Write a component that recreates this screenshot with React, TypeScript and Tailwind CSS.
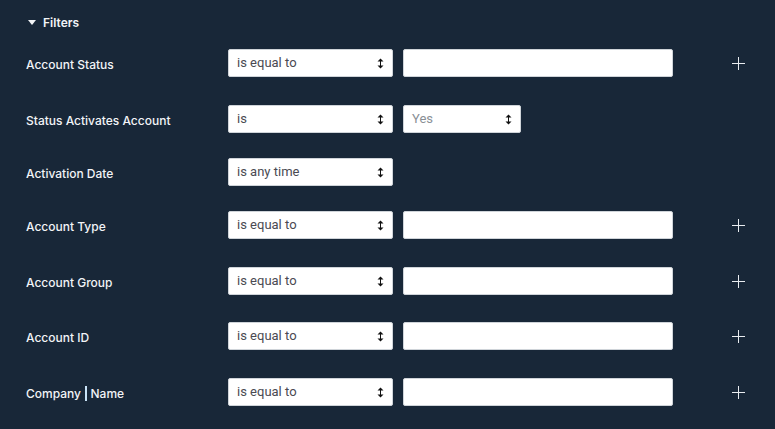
import React from "react";

const Arrows = () => (
  <svg width="7" height="11" viewBox="0 0 7 11" className="shrink-0">
    <path d="M3.5 0.5 L6.5 3.5 L0.5 3.5 Z" fill="#111" />
    <rect x="3" y="3" width="1" height="5" fill="#111" />
    <path d="M3.5 10.5 L6.5 7.5 L0.5 7.5 Z" fill="#111" />
  </svg>
);

const Select = ({ text, w, muted }: { text: string; w: string; muted?: boolean }) => (
  <div
    className={`${w} h-[28px] bg-white border border-[#cfd4d9] rounded-[2px] flex items-center justify-between pl-[8px] pr-[8px] text-[13px] ${
      muted ? "text-[#8a8f96]" : "text-[#4a4a52]"
    }`}
    style={{ fontFamily: "Roboto, 'Liberation Sans', sans-serif" }}
  >
    <span>{text}</span>
    <Arrows />
  </div>
);

const Input = () => (
  <div className="w-[270px] h-[28px] bg-white border border-[#cfd4d9] rounded-[2px]" />
);

const Plus = () => (
  <svg width="13" height="13" viewBox="0 0 13 13">
    <rect x="6" y="0" width="1" height="13" fill="#e8ecf0" />
    <rect x="0" y="6" width="13" height="1" fill="#e8ecf0" />
  </svg>
);

type Row = {
  label: React.ReactNode;
  op: string;
  kind: "input" | "yes" | "none";
  h: string;
};

const rows: Row[] = [
  { label: "Account Status", op: "is equal to", kind: "input", h: "h-[56px]" },
  { label: "Status Activates Account", op: "is", kind: "yes", h: "h-[53px]" },
  { label: "Activation Date", op: "is any time", kind: "none", h: "h-[53px]" },
  { label: "Account Type", op: "is equal to", kind: "input", h: "h-[56px]" },
  { label: "Account Group", op: "is equal to", kind: "input", h: "h-[55px]" },
  { label: "Account ID", op: "is equal to", kind: "input", h: "h-[56px]" },
  {
    label: (
      <>
        Company<span className="inline-block w-[1.5px] h-[15px] bg-[#c9e3f7] mx-[4px] align-[-3px]" />Name
      </>
    ),
    op: "is equal to",
    kind: "input",
    h: "h-[56px]",
  },
];

export default function App() {
  return (
    <div
      className="w-[775px] h-[429px] bg-[#182738] text-[#f2f4f7] overflow-hidden"
      style={{ fontFamily: "Inter, 'Liberation Sans', sans-serif" }}
    >
      <div className="pl-[28px] pt-[12px] h-[35px] flex items-start">
        <div className="flex items-center h-[21px] gap-[7px]">
          <svg width="8" height="5" viewBox="0 0 8 5">
            <path d="M0 0 L8 0 L4 5 Z" fill="#f2f4f7" />
          </svg>
          <span className="text-[12px] font-semibold">Filters</span>
        </div>
      </div>
      {rows.map((r, i) => (
        <div key={i} className={`${r.h} flex items-start pl-[26px]`}>
          <div className="w-[202px] h-[28px] mt-[14px] flex items-center text-[12px] font-medium pt-[3px]">
            <span>{r.label}</span>
          </div>
          <div className="mt-[14px] flex items-center gap-[10px]">
            <Select text={r.op} w="w-[165px]" />
            {r.kind === "input" && <Input />}
            {r.kind === "yes" && <Select text="Yes" w="w-[118px]" muted />}
          </div>
          {r.kind === "input" && (
            <div className="mt-[14px] h-[28px] flex items-center ml-[59px]">
              <Plus />
            </div>
          )}
        </div>
      ))}
    </div>
  );
}
